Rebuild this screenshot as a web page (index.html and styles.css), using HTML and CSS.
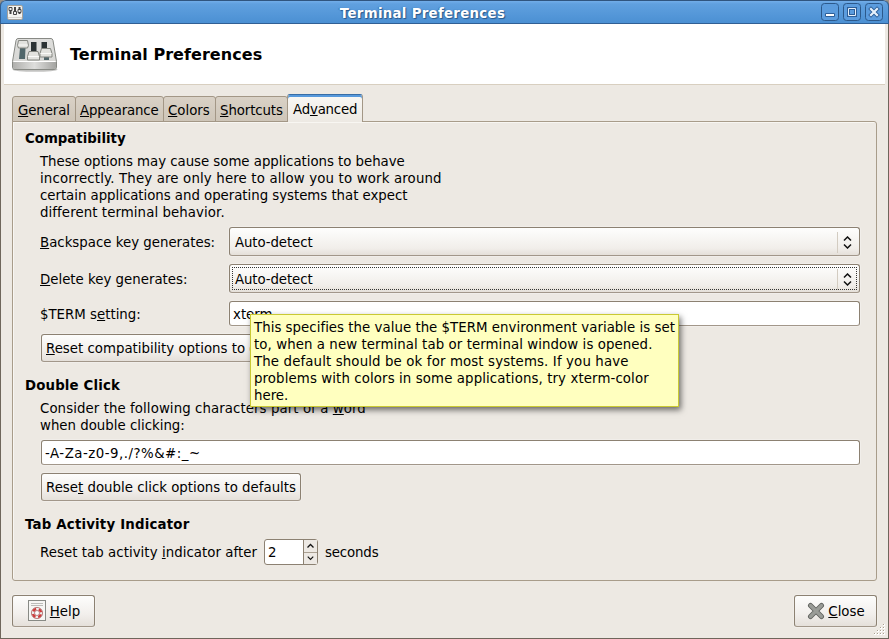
FILE: index.html
```html
<!DOCTYPE html>
<html lang="en">
<head>
<meta charset="utf-8">
<title>Terminal Preferences</title>
<link rel="stylesheet" href="styles.css">
</head>
<body>
<div class="window">
  <div class="titlebar">
    <svg class="app-icon" width="16" height="15" viewBox="0 0 16 15">
      <rect x=".5" y=".5" width="15" height="14" rx="1.500" fill="#f3f3f0" stroke="#a5a19a"/>
      <path d="M1 12.500h14" stroke="#d5d3ce"/>
      <path d="M3.500 5v4M8 2v5M12.500 2v7" stroke="#444" stroke-width="2"/>
      <path d="M2 2.500h3v3H2zM6.500 6.500h3v3h-3zM11 4.500h3v3h-3z" fill="#eee" stroke="#444"/>
    </svg>
    <div class="title">Terminal Preferences</div>
    <div class="controls">
      <svg width="18" height="18" viewBox="0 0 18 18"><rect class="cb" x=".5" y=".5" width="17" height="17" rx="3"/><path d="M4.500 10.500h9v3h-9z" fill="#fff" stroke="#2d5f99"/></svg>
      <svg width="18" height="18" viewBox="0 0 18 18"><rect class="cb" x=".5" y=".5" width="17" height="17" rx="3"/><path d="M5.500 5.500h7v7h-7z" fill="none" stroke="#2d5f99" stroke-width="3"/><path d="M5.500 5.500h7v7h-7z" fill="none" stroke="#e6f1fc"/></svg>
      <svg width="18" height="18" viewBox="0 0 18 18"><rect class="cb" x=".5" y=".5" width="17" height="17" rx="3"/><path d="M6 6l6 6M12 6l-6 6" stroke="#2d5f99" stroke-width="4" stroke-linecap="square"/><path d="M6 6l6 6M12 6l-6 6" stroke="#e6f1fc" stroke-width="2.200" stroke-linecap="square"/></svg>
    </div>
  </div>
  <div class="header">
    <svg class="mixer" width="48" height="36" viewBox="0 0 48 36">
      <defs>
        <linearGradient id="face" x1="0" y1="0" x2="0" y2="1"><stop offset="0" stop-color="#dededc"/><stop offset="1" stop-color="#d6d6d3"/></linearGradient>
        <linearGradient id="edge" x1="0" y1="0" x2="1" y2="0"><stop offset="0" stop-color="#b0b0ad"/><stop offset=".5" stop-color="#dededc"/><stop offset="1" stop-color="#a4a4a1"/></linearGradient>
      </defs>
      <ellipse cx="24" cy="33.500" rx="22.500" ry="2.300" fill="#a9a9a6" opacity=".7"/>
      <path d="M7 2.500h33q1.500 0 2 2l3.500 21v5.500q0 2.500-2.500 2.500H4q-2.500 0-2.500-2.500v-5.500l3.500-21Q5.500 2.500 7 2.500z" fill="url(#face)" stroke="#888a85"/>
      <path d="M2 26h43v5q0 2-2 2H4q-2 0-2-2z" fill="url(#edge)"/>
      <path d="M2.500 25.500h42" stroke="#fff"/>
      <path d="M20 6h5.500v9H20zM30.500 6H36v7h-5.500z" fill="#2b3234"/>
      <path d="M9 12h5.500l-.5 11H8zM33 21h5v3h-5z" fill="#50666a"/>
      <g fill="#e2e2de" stroke="#858781" stroke-linejoin="round">
        <path d="M7.500 4.500h9l1 5-1 2.500h-9l-1-2.500z"/>
        <path d="M18 15.500h9l1.500 5v3.500H16.500v-3.500z"/>
        <path d="M30.500 12.500H39.500l1.500 5V21H29v-3.500z"/>
      </g>
      <path d="M7.500 9h9M17 20.500h11M29.500 17.500h11" stroke="#fafaf8"/>
    </svg>
    <div class="header-title">Terminal Preferences</div>
  </div>
  <div class="content">
    <div class="tabs">
      <div class="tab t1"><u>G</u>eneral</div>
      <div class="tab t2"><u>A</u>ppearance</div>
      <div class="tab t3"><u>C</u>olors</div>
      <div class="tab t4"><u>S</u>hortcuts</div>
      <div class="tab active">Ad<u>v</u>anced</div>
    </div>
    <div class="page">
      <h2>Compatibility</h2>
      <p><span class="ls-n3">These options may cause some applications to behave</span><br><span class="ls-15">incorrectly. They are only here to allow you to work around</span><br><span class="ls-n3">certain applications and operating systems that expect</span><br><span class="ls-8">different terminal behavior.</span></p>
      <div class="form">
        <label><u>B</u>ackspace key generates:</label>
        <div class="combo"><span>Auto-detect</span><i class="sep"></i><svg width="9" height="13" viewBox="0 0 9 13"><path d="M1 4.500L4.500 1 8 4.500M1 8.500L4.500 12 8 8.500" fill="none" stroke="#111" stroke-width="1.500"/></svg></div>
        <label><u>D</u>elete key generates:</label>
        <div class="combo focus"><span>Auto-detect</span><i class="sep"></i><svg width="9" height="13" viewBox="0 0 9 13"><path d="M1 4.500L4.500 1 8 4.500M1 8.500L4.500 12 8 8.500" fill="none" stroke="#111" stroke-width="1.500"/></svg></div>
        <label>$TERM s<u>e</u>tting:</label>
        <div class="entry">xterm</div>
      </div>
      <div class="button reset"><span><u>R</u>eset compatibility options to defaults</span></div>
      <h2 class="h-double">Double Click</h2>
      <p><span class="ls-8">Consider the following characters part of a <u>w</u>ord</span><br>when double clicking:</p>
      <div class="entry chars">-A-Za-z0-9,./?%&amp;#:_~</div>
      <div class="button reset"><span>Rese<u>t</u> double click options to defaults</span></div>
      <h2 class="h-tab">Tab Activity Indicator</h2>
      <div class="spin-row">
        <span class="before">Reset tab activity <u>i</u>ndicator after</span>
        <div class="spin"><span>2</span><div class="arrows">
          <svg width="13" height="12" viewBox="0 0 13 12"><path d="M3.500 7.500l3-3 3 3" fill="none" stroke="#111" stroke-width="1.300"/></svg>
          <svg width="13" height="12" viewBox="0 0 13 12"><path d="M3.500 4l3 3 3-3" fill="none" stroke="#111" stroke-width="1.300"/></svg>
        </div></div>
        <span class="after">seconds</span>
      </div>
    </div>
    <div class="actions">
      <div class="button action"><svg width="20" height="22" viewBox="0 0 20 22">
        <rect x="1.500" y=".5" width="17" height="20" fill="#f6f6f4" stroke="#888a85"/><path d="M4 3.500h12M4 5.500h12" stroke="#bcbcb9"/>
        <circle cx="10" cy="13" r="4.100" fill="none" stroke="#eeeeec" stroke-width="3"/><circle cx="10" cy="13" r="4.100" fill="none" stroke="#d23c3c" stroke-width="2.600" stroke-dasharray="3.700 2.740" stroke-dashoffset="-1.370"/><circle cx="10" cy="13" r="5.600" fill="none" stroke="#a66" stroke-width=".8"/><circle cx="10" cy="13" r="2.500" fill="#fff" stroke="#a66" stroke-width=".8"/></svg><span><u>H</u>elp</span></div>
      <div class="button action close"><svg width="18" height="18" viewBox="0 0 18 18"><path d="M3.500 3.500l11 11M14.500 3.500l-11 11" stroke="#60625e" stroke-width="5" stroke-linecap="round"/><path d="M3.500 3.500l11 11M14.500 3.500l-11 11" stroke="#9a9c97" stroke-width="3.200" stroke-linecap="round"/></svg><span><u>C</u>lose</span></div>
    </div>
  </div>
  <svg class="grip" width="11" height="11" viewBox="0 0 11 11"><path d="M9 0h2v2H9zM6 3h2v2H6zM9 3h2v2H9zM3 6h2v2H3zM6 6h2v2H6zM9 6h2v2H9zM0 9h2v2H0zM3 9h2v2H3zM6 9h2v2H6zM9 9h2v2H9z" fill="#fff"/><path d="M9 0h1v1H9zM6 3h1v1H6zM9 3h1v1H9zM3 6h1v1H3zM6 6h1v1H6zM9 6h1v1H9zM0 9h1v1H0zM3 9h1v1H3zM6 9h1v1H6zM9 9h1v1H9z" fill="#aaa08f"/></svg>
  <div class="tooltip"><span class="ls-3">This specifies the value the $TERM environment variable is set</span><br><span class="ls-8">to, when a new terminal tab or terminal window is opened.</span><br><span class="ls-13">The default should be ok for most systems. If you have</span><br><span class="ls-10">problems with colors in some applications, try xterm-color</span><br>here.</div>
</div>
</body>
</html>
```
FILE: styles.css
```css
* { box-sizing: border-box; }
html { background: #9a938a; }
body {
  margin: 0;
  font: 13.333px/17px "DejaVu Sans", sans-serif;
  color: #000;
  overflow: hidden;
  white-space: nowrap;
}
u {
  text-decoration: underline 1px;
  text-underline-offset: 1px;
  text-decoration-skip-ink: none;
}
.ls-n3 { letter-spacing: -.03px; }
.ls-3 { letter-spacing: .03px; }
.ls-8 { letter-spacing: .08px; }
.ls-10 { letter-spacing: .105px; }
.ls-13 { letter-spacing: .13px; }
.ls-15 { letter-spacing: .155px; }
.window {
  position: relative;
  width: 889px;
  height: 639px;
  display: flex;
  flex-direction: column;
  border: 1px solid #6f665b;
  border-top: 0;
  border-radius: 5px 5px 0 0;
  background: #ede9e3;
}
.titlebar {
  height: 24px;
  margin: 0 -1px;
  display: flex;
  align-items: center;
  border: 1px solid #305f94;
  border-top-color: #30557f;
  border-radius: 6px 6px 0 0;
  background: linear-gradient(#72ade9, #60a0df 3px, #4b90d3);
  padding: 0 5px 0 6px;
}
.title {
  flex: 1;
  padding: 2px 0 0 1px;
  text-align: center;
  color: #fff;
  font-weight: bold;
  letter-spacing: .3px;
  text-shadow: 1px 1px 1px #285889, -1px 0 1px #3b74ae;
}
.controls { display: flex; gap: 4px; }
.cb { fill: #5b9cde; stroke: #2c598b; }
.header {
  height: 61px;
  margin: 0 3px;
  display: flex;
  align-items: center;
  background: #fff;
  border-bottom: 1px solid #d8cfc0;
  padding-left: 7px;
}
.header-title { margin-left: 11px; font-size: 16px; font-weight: bold; letter-spacing: .05px; }
.content { padding: 9px 11px 0; }
.tabs { display: flex; align-items: flex-end; height: 28px; position: relative; z-index: 1; }
.tab {
  height: 26px;
  margin-right: -1px;
  border: 1px solid #a39786;
  border-radius: 3px 3px 0 0;
  background: linear-gradient(#d9d1c6, #cec5b8);
  padding: 5px 0 0 5px;
  letter-spacing: -.1px;
}
.t1 { width: 64px; }
.t2 { width: 89px; padding-left: 4px; letter-spacing: -.15px; }
.t3 { width: 53px; padding-left: 4px; letter-spacing: 0; }
.t4 { width: 73px; padding-left: 4px; }
.tab.active {
  width: 76px;
  height: 28px;
  border-top: 1px solid #386da5;
  border-bottom: 0;
  box-shadow: inset 0 2px #5799dc;
  background: linear-gradient(#f9f8f5, #ede9e3);
  padding-top: 6px;
  letter-spacing: -.2px;
}
.page {
  height: 460px;
  margin-top: -1px;
  border: 1px solid #a89c8a;
  border-radius: 0 3px 3px 3px;
  box-shadow: inset 1px 1px #f8f6f2;
  padding: 8px 16px 0 27px;
}
h2 { font-size: 13.333px; line-height: 17px; margin: 0 0 6px -15px; }
p { margin: 0; }
.form {
  display: grid;
  grid-template-columns: 189px 631px;
  grid-template-rows: 30px 30px 26px;
  row-gap: 7px;
  align-items: center;
  margin-top: 6px;
}
.combo, .entry, .button {
  border: 1px solid #8c8172;
  border-bottom-color: #a2978a;
  border-radius: 3px;
  box-shadow: 0 0 0 1px rgba(255, 255, 255, .25);
}
.combo {
  height: 29px;
  align-self: start;
  display: flex;
  align-items: center;
  position: relative;
  background: linear-gradient(#fefefd, #f1eeea 75%, #e5e0d9);
  padding: 1px 7px 0 5px;
}
.combo span { flex: 1; letter-spacing: -.1px; }
.sep { height: 21px; border-left: 1px solid #d3ccc1; margin-right: 5px; }
.focus::after { content: ""; position: absolute; inset: 2px; border: 1px dotted #333; }
.entry { height: 25px; align-self: start; background: #fff; padding: 4px 3px; }
.button {
  display: flex;
  align-items: center;
  justify-content: center;
  background: linear-gradient(#fdfdfc, #f2efec 60%, #e5e0da);
}
.reset { width: 260px; height: 28px; margin: 7px 0 0 1px; justify-content: flex-start; padding-left: 4px; }
.h-double { margin-top: 15px; letter-spacing: .15px; }
.chars { width: 819px; margin: 6px 0 8px 1px; letter-spacing: .5px; }
.h-tab { margin-top: 15px; letter-spacing: .19px; }
.spin-row { display: flex; align-items: center; }
.before { width: 217px; letter-spacing: .05px; }
.after { letter-spacing: -.15px; }
.spin {
  width: 54px;
  height: 26px;
  margin: 0 7px;
  display: flex;
  border: 1px solid #8c8172;
  border-radius: 3px;
  background: #fff;
}
.spin span { flex: 1; padding: 4px 3px; }
.arrows { width: 14px; border-left: 1px solid #8c8172; background: #ede9e4; }
.arrows svg { display: block; }
.arrows svg + svg { border-top: 1px solid #aaa092; }
.actions { display: flex; justify-content: space-between; margin-top: 14px; }
.action { width: 83px; height: 32px; gap: 3px; }
.close { padding-left: 1px; }
.grip { position: absolute; right: 3px; bottom: 3px; }
.tooltip {
  position: absolute;
  left: 249px;
  top: 314px;
  width: 429px;
  height: 93px;
  padding: 4px 0 0 3px;
  border: 1px solid #c9c932;
  background: #ffffbf;
  box-shadow: 2px 3px 6px rgba(0, 0, 0, .55);
}
```
